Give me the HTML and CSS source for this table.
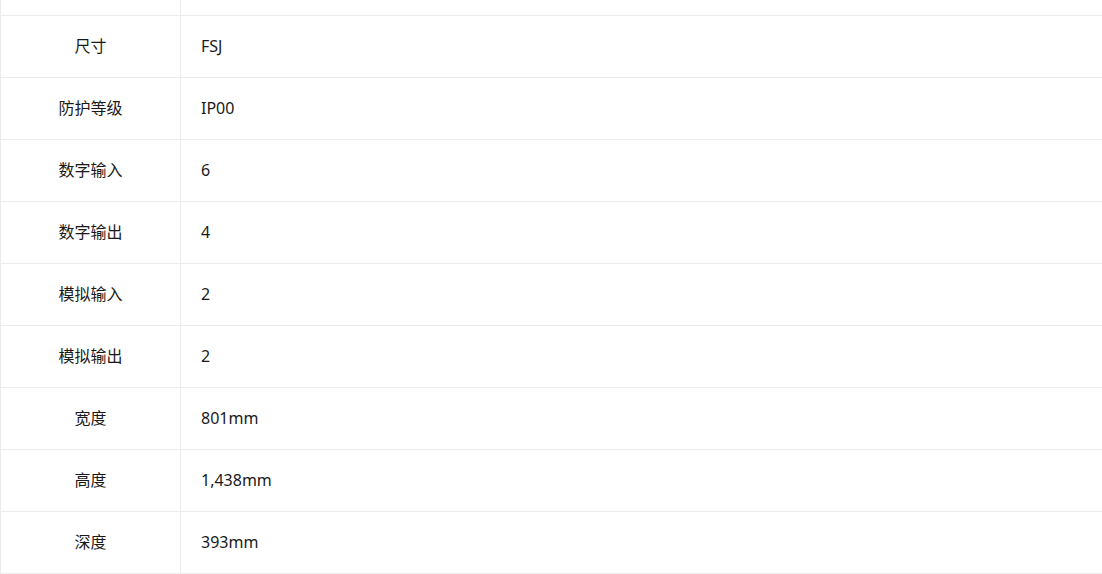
FILE: index.html
```html
<!DOCTYPE html>
<html lang="zh-CN">
<head>
<meta charset="utf-8">
<title>参数</title>
<link rel="stylesheet" href="styles.css">
</head>
<body>
<table class="spec">
  <colgroup><col class="c-label"><col class="c-value"></colgroup>
  <tbody>
    <tr class="row-partial"><td class="label"></td><td class="value"></td></tr>
    <tr><td class="label">尺寸</td><td class="value">FSJ</td></tr>
    <tr><td class="label">防护等级</td><td class="value">IP00</td></tr>
    <tr><td class="label">数字输入</td><td class="value">6</td></tr>
    <tr><td class="label">数字输出</td><td class="value">4</td></tr>
    <tr><td class="label">模拟输入</td><td class="value">2</td></tr>
    <tr><td class="label">模拟输出</td><td class="value">2</td></tr>
    <tr><td class="label">宽度</td><td class="value">801mm</td></tr>
    <tr><td class="label">高度</td><td class="value">1,438mm</td></tr>
    <tr><td class="label">深度</td><td class="value">393mm</td></tr>
  </tbody>
</table>
</body>
</html>
```

FILE: styles.css
```css
html, body {
  margin: 0;
  padding: 0;
  background: #ffffff;
}
body {
  font-family: "Noto Sans", "Noto Sans CJK SC", sans-serif;
  font-size: 16px;
  color: #1a1a1a;
  overflow: hidden;
}
.spec {
  width: 100%;
  border-collapse: collapse;
  table-layout: fixed;
}
.c-label { width: 180px; }
.spec td {
  height: 62px;
  padding: 0;
  border: 1px solid #ebebeb;
  vertical-align: middle;
  box-sizing: border-box;
  line-height: 20px;
}
.spec tr.row-partial td {
  height: 15px;
  border-top: none;
}
.spec td.label {
  text-align: center;
}
.spec td.value {
  padding-left: 20px;
  border-right: none;
}
```
